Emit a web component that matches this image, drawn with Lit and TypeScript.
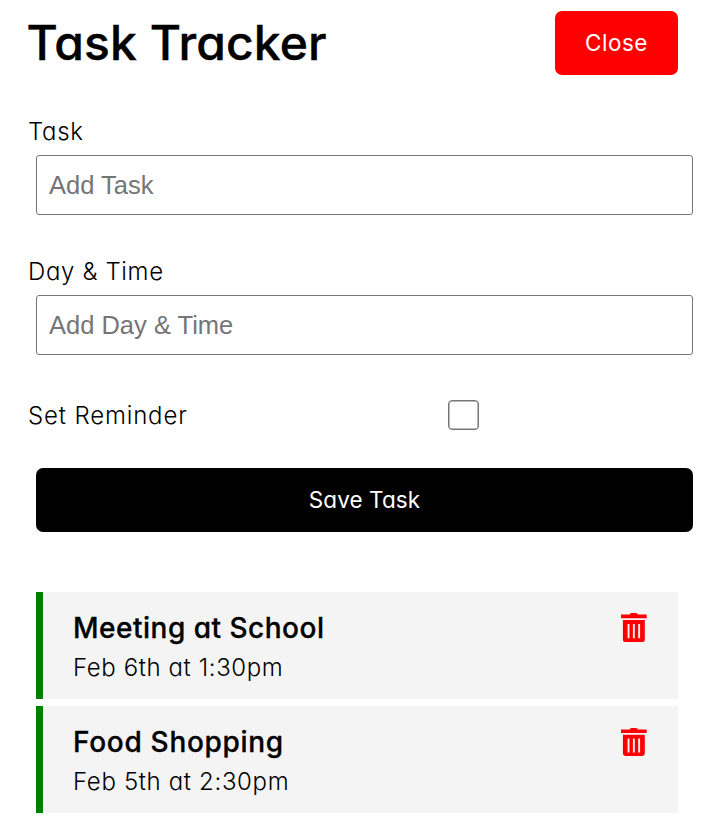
import { LitElement, html, css, svg } from "lit";
import { customElement, state } from "lit/decorators.js";

interface Task {
  id: number;
  text: string;
  day: string;
  name: string;
}

const trashIcon = svg`
  <path d="M8.700 1.600Q9.100 0 10.300 0h5Q16.500 0 16.900 1.600H25.700V5.200H0V1.600Z"/>
  <path fill-rule="evenodd" d="M1.900 7H23.800V26.500Q23.800 29 21.300 29H4.400Q1.900 29 1.900 26.500ZM6.600 11V25.300H8.500V11ZM11.900 11V25.300H13.800V11ZM17.200 11V25.300H19.100V11Z"/>
`;

@customElement("app-root")
export class AppRoot extends LitElement {
  @state() private tasks: Task[] = [
    { id: 1, text: "Meeting at School", day: "Feb 6th at 1:30pm", name: "meeting" },
    { id: 2, text: "Food Shopping", day: "Feb 5th at 2:30pm", name: "food" },
  ];

  static styles = css`
    :host {
      display: block;
      box-sizing: border-box;
      height: 820px;
      overflow: hidden;
      padding: 11px 28px 0;
      background: #fff;
      color: #000;
      font-family: Inter, "Open Sans", sans-serif;
      font-feature-settings: "cv11";
      font-size: 24px;
      font-weight: 300;
      line-height: 36px;
      white-space: nowrap;
    }
    * { box-sizing: border-box; }
    header {
      display: flex;
      align-items: center;
      justify-content: space-between;
      height: 64px;
      margin: 0 15px 38px 0;
    }
    h1 {
      margin: -1px 0 0 -1.5px;
      font-size: 48px;
      font-weight: 500;
      line-height: 64px;
      letter-spacing: 0.1px;
      -webkit-text-stroke: 0.4px #000;
    }
    .btn {
      display: block;
      height: 64px;
      padding: 0;
      border: 0;
      border-radius: 7px;
      color: #fff;
      font: inherit;
      font-size: 22.5px;
      font-weight: 400;
      font-feature-settings: inherit;
      text-align: center;
    }
    .close { width: 123px; background: #f00; letter-spacing: 0.5px; }
    .save { width: 657px; margin-left: 8px; background: #000; letter-spacing: 0.1px; }
    .field { display: flex; flex-direction: column; gap: 5px; margin-bottom: 38px; }
    .field label { line-height: 36px; padding-top: 1px; }
    .text {
      width: 657px;
      height: 60px;
      margin: 0 0 0 8px;
      padding: 0 12px;
      border: 1px solid #767676;
      border-radius: 3px;
      background: #fff;
      font: 25.5px "Liberation Sans", Arial, sans-serif;
      outline: none;
    }
    .text::placeholder { color: #757575; }
    label { letter-spacing: 0.65px; }
    .reminder { display: flex; align-items: center; height: 36px; margin: 42px 0 35px; }
    .reminder label { width: 420px; letter-spacing: 0.85px; padding-top: 2px; }
    .check {
      appearance: none;
      width: 31px;
      height: 30px;
      margin: 0;
      border: 1px solid #767676;
      border-radius: 4px;
      box-shadow: inset 0 0 0 0.5px #767676;
      background: #fff;
    }
    .tasks { display: flex; flex-direction: column; gap: 7px; margin: 60px 15px 0 8px; }
    .task {
      display: flex;
      justify-content: space-between;
      height: 107px;
      padding: 18px 31.5px 0 30px;
      border-left: 7px solid green;
      background: #f4f4f4;
    }
    h3 {
      margin: 0 0 4px;
      font-size: 28px;
      font-weight: 500;
      line-height: 36px;
      letter-spacing: 0.5px;
      -webkit-text-stroke: 0.3px #000;
    }
    .food h3 { letter-spacing: 0.7px; }
    p { margin: 0; letter-spacing: 0.6px; }
    .food p { letter-spacing: 0.65px; }
    .trash { width: 26px; height: 29px; margin-top: 3px; fill: #f00; }
    .food .trash { margin-top: 4px; height: 28px; }
  `;

  render() {
    return html`
      <header>
        <h1>Task Tracker</h1>
        <button class="btn close">Close</button>
      </header>
      <form @submit=${(e: Event) => e.preventDefault()}>
        <div class="field">
          <label for="task">Task</label>
          <input class="text" id="task" type="text" placeholder="Add Task" />
        </div>
        <div class="field">
          <label for="day">Day &amp; Time</label>
          <input class="text" id="day" type="text" placeholder="Add Day &amp; Time" />
        </div>
        <div class="reminder">
          <label for="reminder">Set Reminder</label>
          <input class="check" id="reminder" type="checkbox" />
        </div>
        <button class="btn save">Save Task</button>
      </form>
      <div class="tasks">
        ${this.tasks.map(
          (t) => html`
            <div class="task ${t.name}">
              <div>
                <h3>${t.text}</h3>
                <p>${t.day}</p>
              </div>
              <svg class="trash" viewBox="0 0 26 29" preserveAspectRatio="none">${trashIcon}</svg>
            </div>
          `
        )}
      </div>
    `;
  }
}
